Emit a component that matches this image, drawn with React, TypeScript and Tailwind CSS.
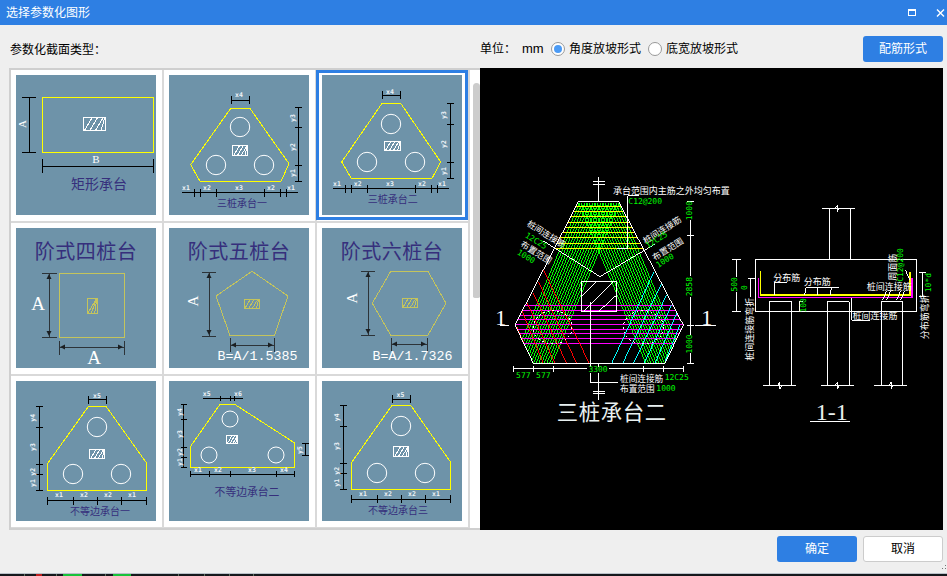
import React from "react";

const cjk = "'Noto Sans CJK SC', sans-serif";
const mono = "'DejaVu Sans Mono', monospace";
const serif = "'Liberation Serif', 'Noto Sans CJK SC', serif";

type TP = { x: number; y: number; s: number; c?: string; r?: number; f?: string; a?: "start" | "middle" | "end"; ls?: number; b?: boolean; children: React.ReactNode };
function T({ x, y, s, c = "#fff", r, f = cjk, a = "middle", ls, b, children }: TP) {
  return (
    <text x={x} y={y} fontSize={s} fill={c} fontFamily={f} textAnchor={a} dominantBaseline="central" letterSpacing={ls} fontWeight={b ? 700 : 400}
      transform={r !== undefined ? `rotate(${r} ${x} ${y})` : undefined} shapeRendering="auto">
      {children}
    </text>
  );
}

const dimH = (y: number, xs: number[], t = 4) =>
  `M${xs[0]} ${y}H${xs[xs.length - 1]}` + xs.map((x) => `M${x} ${y - t}V${y + t}`).join("");
const dimV = (x: number, ys: number[], t = 4) =>
  `M${x} ${ys[0]}V${ys[ys.length - 1]}` + ys.map((y) => `M${x - t} ${y}H${x + t}`).join("");

function Hatch({ x0, x1, y0, y1, c = "#fff", n = 4 }: { x0: number; x1: number; y0: number; y1: number; c?: string; n?: number }) {
  const h = y1 - y0;
  const w = x1 - x0;
  const d = [];
  for (let i = 0; i < n; i++) {
    const bx = x0 + ((i + 0.3) * w) / n;
    d.push(`M${bx} ${y1}L${Math.min(bx + h * 0.6, x1)} ${y0}`);
  }
  return (
    <g fill="none" stroke={c}>
      <rect x={x0} y={y0} width={w} height={h} />
      <path d={d.join("")} />
    </g>
  );
}

const Y = "#ffff00";
const NAVY = "#362f7c";

function Thumb({ children }: { children: React.ReactNode }) {
  return (
    <svg viewBox="0 0 140 140" className="block w-[140px] h-[140px] bg-[#6e93a9]" shapeRendering="crispEdges">
      {children}
    </svg>
  );
}

type Tri = {
  poly: string;
  circles: number[][];
  r?: number;
  hatch: number[];
  black: string;
  labels: [string, number, number, boolean?][];
  title: string;
  tx: number;
  ty: number;
  ts?: number;
};

function PileThumb({ d }: { d: Tri }) {
  return (
    <Thumb>
      <polygon points={d.poly} fill="none" stroke={Y} />
      {d.circles.map((c, i) => (
        <circle key={i} cx={c[0]} cy={c[1]} r={d.r ?? 9.7} fill="none" stroke="#fff" shapeRendering="auto" />
      ))}
      <Hatch x0={d.hatch[0]} x1={d.hatch[1]} y0={d.hatch[2]} y1={d.hatch[3]} />
      <path d={d.black} fill="none" stroke="#000" />
      {d.labels.map((l, i) => (
        <T key={i} x={l[1]} y={l[2]} s={6.5} f={mono} b r={l[3] ? -90 : undefined} c="#eef4f8">
          {l[0]}
        </T>
      ))}
      <T x={d.tx} y={d.ty} s={d.ts ?? 10} c={NAVY}>
        {d.title}
      </T>
    </Thumb>
  );
}

const t1: Tri = {
  poly: "62,33 80.7,33 120,88.7 112,106.3 31,106.3 21.7,89.7",
  circles: [[71, 52], [47, 90], [95, 90]],
  hatch: [63.5, 78.5, 70, 80.5],
  black: dimH(25, [62.7, 80.3]) + dimV(129.5, [32.7, 52.7, 90.3, 106.3], 3.5) + dimH(117.5, [25.3, 31.3, 47.3, 95.3, 111.3, 117.3], 4) + "M13.3 117.5H128.7",
  labels: [["x4", 70, 20], ["y3", 124, 43, true], ["y2", 124, 72, true], ["y1", 124, 98, true], ["x1", 17, 112.5], ["x2", 38, 112.5], ["x3", 70, 112.5], ["x2", 102, 112.5], ["x1", 122, 112.5]],
  title: "三桩承台一", tx: 73, ty: 127,
};
const t2: Tri = {
  poly: "60,28.3 78.7,28.3 118.7,87 110,103.3 29.3,103.3 19.7,87",
  circles: [[69, 49], [45, 87], [93, 87]],
  hatch: [62.5, 78.5, 66, 75],
  black: dimH(20, [60.7, 78.3]) + dimV(128, [28.3, 49.3, 87.3, 103.3], 3.5) + dimH(113.5, [23.7, 29.3, 45.3, 93.3, 109.3, 115.3], 4) + "M11.3 113.5H126.7",
  labels: [["x4", 68, 17], ["y3", 122, 40, true], ["y2", 122, 69, true], ["y1", 122, 96, true], ["x1", 15, 109], ["x2", 35.7, 109], ["x3", 68, 109], ["x2", 100, 109], ["x1", 120, 109]],
  title: "三桩承台二", tx: 70.7, ty: 123.7,
};
const t3: Tri = {
  poly: "72.3,25.7 90.3,25.7 130.7,82.3 130.7,109.3 31.7,109.3 31.7,82.3",
  circles: [[81, 46], [57, 93], [105, 93]],
  hatch: [73.5, 88.5, 68.5, 77.5],
  black: dimH(18.7, [72.7, 90.3]) + dimV(23.7, [25.7, 46.3, 83.3, 93.3, 109.3], 3.5) + dimH(119.7, [31.7, 57.3, 81.3, 105.7, 130.7], 4),
  labels: [["x5", 81, 15], ["y4", 17.3, 36.7, true], ["y3", 17.3, 66, true], ["y2", 17.3, 90.7, true], ["y1", 17.3, 102, true], ["x1", 43, 114.3], ["x2", 68, 114.3], ["x2", 92, 114.3], ["x1", 116, 114.3]],
  title: "不等边承台一", tx: 84, ty: 129.7,
};
const t4: Tri = {
  poly: "51,23.3 65.7,23.3 125.7,62 125.7,86.3 21.3,86.3 21.3,65.7",
  circles: [[61, 38], [40, 74], [107, 74]],
  r: 8,
  hatch: [57.5, 68.5, 54.5, 62.5],
  black: dimH(17.3, [51.3, 61.7, 65.7], 2.5) + "M34.3 17.3H73.7" + dimV(14.7, [23.3, 38.3, 66, 76.7, 86.3], 3) + dimV(136, [62, 74.3], 3.5) + dimH(93.3, [21.3, 40.3, 61, 107.3, 125.7], 3),
  labels: [["x5", 37.7, 13], ["x6", 69, 13], ["y4", 11, 31, true], ["y3", 11, 53, true], ["y2", 11, 71, true], ["y1", 11, 81, true], ["y5", 131, 69, true], ["x1", 29, 89], ["x2", 49, 89], ["x3", 83, 89], ["x4", 115, 89]],
  title: "不等边承台二", tx: 78, ty: 110.3, ts: 10.8,
};
const t5: Tri = {
  poly: "70,24.3 88.7,24.3 128.7,81.3 128.7,108.3 29.7,108.3 29.7,81.3",
  circles: [[79, 45], [55, 92], [103, 92]],
  hatch: [71.5, 86.5, 65.5, 75.5],
  black: dimH(18.3, [70.7, 88.3]) + dimV(21.7, [24.3, 45.3, 82.3, 92.7, 108.3], 3.5) + dimH(118.3, [29.7, 55.3, 79.3, 103.3, 128.7], 4),
  labels: [["x5", 78.5, 14], ["y4", 15.3, 36.3, true], ["y3", 15.3, 65, true], ["y2", 15.3, 89.7, true], ["y1", 15.3, 101.7, true], ["x1", 41, 113.3], ["x2", 66, 113.3], ["x2", 90, 113.3], ["x1", 114, 113.3]],
  title: "不等边承台三", tx: 76, ty: 128.7,
};

const OL = "#c4c45c";
const DK = "#2c3338";

function Arrows({ v, h }: { v?: number[]; h?: number[] }) {
  return (
    <g fill="#1b1f22" shapeRendering="auto">
      {v && (
        <>
          <polygon points={`${v[0]},${v[1]} ${v[0] - 2.5},${v[1] + 5} ${v[0] + 2.5},${v[1] + 5}`} />
          <polygon points={`${v[0]},${v[2]} ${v[0] - 2.5},${v[2] - 5} ${v[0] + 2.5},${v[2] - 5}`} />
        </>
      )}
      {h && (
        <>
          <polygon points={`${h[0]},${h[2]} ${h[0] + 5},${h[2] - 2.5} ${h[0] + 5},${h[2] + 2.5}`} />
          <polygon points={`${h[1]},${h[2]} ${h[1] - 5},${h[2] - 2.5} ${h[1] - 5},${h[2] + 2.5}`} />
        </>
      )}
    </g>
  );
}

function Rect() {
  return (
    <Thumb>
      <rect x={26} y={22} width={111} height={55} fill="none" stroke={Y} />
      <Hatch x0={67} x1={89} y0={42} y1={55} />
      <path d={dimV(13, [22, 77], 7) + dimH(91, [26, 137], 7)} fill="none" stroke="#000" />
      <T x={6} y={49} s={11} f={serif} r={-90}>A</T>
      <T x={80} y={84} s={11} f={serif}>B</T>
      <T x={83} y={108} s={14} c={NAVY}>矩形承台</T>
    </Thumb>
  );
}

function Step4() {
  return (
    <Thumb>
      <T x={70} y={22} s={20} c={NAVY} ls={0.5}>阶式四桩台</T>
      <rect x={43} y={45} width={65} height={64} fill="none" stroke={OL} />
      <Hatch x0={71} x1={81} y0={70} y1={85} c={OL} n={3} />
      <path d="M33 45V109M26 45H41M26 109H41M43 119H108M43 113V127M108 113V127" fill="none" stroke={DK} />
      <Arrows v={[33, 46, 108]} h={[44, 107, 119]} />
      <T x={22} y={75} s={19} f={serif}>A</T>
      <T x={78} y={129} s={19} f={serif}>A</T>
    </Thumb>
  );
}
function Step5() {
  return (
    <Thumb>
      <T x={70} y={22} s={20} c={NAVY} ls={0.5}>阶式五桩台</T>
      <polygon points="83,43.3 119,68 105.3,107.7 61,107.7 47,68" fill="none" stroke={OL} />
      <Hatch x0={75} x1={90} y0={71} y1={80} c={OL} n={4} />
      <path d="M40 44V108M33 44H47M33 108H47M61 117H105M61 110V124M105 110V124" fill="none" stroke={DK} />
      <Arrows v={[40, 45, 107]} h={[62, 104, 117]} />
      <T x={24} y={73} s={15} f={serif} r={-90}>A</T>
      <T x={88.5} y={128} s={13.3} f="'Liberation Mono', monospace">B=A/1.5385</T>
    </Thumb>
  );
}
function Step6() {
  return (
    <Thumb>
      <T x={70} y={22} s={20} c={NAVY} ls={0.5}>阶式六桩台</T>
      <polygon points="68.7,43.3 106,43.3 124,75.3 106,107 68.7,107 50.3,75.3" fill="none" stroke={OL} />
      <Hatch x0={80} x1={95} y0={70} y1={79} c={OL} n={4} />
      <path d="M46 43V107M39 43H53M39 107H53M69 116H105M69 110V123M105 110V123" fill="none" stroke={DK} />
      <Arrows v={[46, 44, 106]} h={[70, 104, 116]} />
      <T x={30} y={70} s={15} f={serif} r={-90}>A</T>
      <T x={90.5} y={128} s={13.3} f="'Liberation Mono', monospace">B=A/1.7326</T>
    </Thumb>
  );
}

function Plan() {
  const G = "#00ff00";
  const green: string[] = [];
  for (let i = 0; i < 16; i++) {
    const x = 238 + i * 8;
    green.push(`M${x} 100L${x - 0.42 * 480} 580`);
    green.push(`M${594 - x} 100L${594 - x + 0.42 * 480} 580`);
  }
  const ys = [95, 110, 125, 141, 157, 173, 188, 204, 220, 235];
  const ms = [408, 422, 436, 450, 464, 478, 492, 506, 520];
  return (
    <g transform="translate(500 170) scale(0.33333)" fill="none" strokeWidth={3}>
      <defs>
        <clipPath id="hex">
          <polygon points="235,95 356,95 550,465 495,580 100,580 45,465" />
        </clipPath>
      </defs>
      <g clipPath="url(#hex)">
        <path d={green.join("")} stroke={G} />
        <path d={ys.map((y) => `M0 ${y}H600`).join("")} stroke={Y} />
        <path d={ms.map((y) => `M0 ${y}H600`).join("")} stroke="#ff00ff" />
        <path d="M130 300L268 580M115 335L230 580M100 370L200 580M82 400L165 580M65 420L130 580M50 470L95 575" stroke="#ff0000" />
        <path d="M462 305L335 580M485 340L368 580M500 375L400 580M515 405L432 580M530 430L465 580M540 465L495 575" stroke="#00ffff" />
      </g>
      <polygon points="235,95 356,95 550,465 495,580 100,580 45,465" stroke="#fff" />
      <path d="M130 213L300 320L465 222" stroke="#fff" />
      <rect x={245} y={335} width={105} height={90} stroke="#fff" />
      <path d="M245 380L290 335M250 425L340 335M295 425L350 375" stroke="#fff" />
      <ellipse cx={158} cy={472} rx={58} ry={50} stroke="#fff" strokeDasharray="5 9" />
      <ellipse cx={430} cy={472} rx={60} ry={50} stroke="#fff" strokeDasharray="5 9" />
      <path d="M297 20V95M297 580V690M279 36H315M279 44H315M279 664H315M279 672H315" stroke="#fff" />
      <path d="M272 395V638H355M272 440V525" stroke="#fff" />
      <path d="M418 78H383V237H350" stroke="#fff" />
      <path d="M0 467H28M585 467H648" stroke="#fff" />
      <path d={dimV(572, [95, 198, 467, 580], 10)} stroke="#fff" />
      <path d={dimH(597, [42, 100, 160, 430, 490, 550], 9)} stroke="#fff" />
      <T x={514} y={63} s={27}>承台范围内主筋之外均匀布置</T>
      <T x={385} y={96} s={24} c={G} f={mono} a="start">C12@200</T>
      <rect x={558} y={95} width={24} height={55} fill="#000" />
      <rect x={558} y={318} width={24} height={62} fill="#000" />
      <rect x={558} y={495} width={24} height={55} fill="#000" />
      <T x={570} y={122} s={24} c={G} f={mono} r={-90}>1000</T>
      <T x={570} y={350} s={24} c={G} f={mono} r={-90}>2858</T>
      <T x={570} y={522} s={24} c={G} f={mono} r={-90}>1000</T>
      <rect x={262} y={590} width={64} height={20} fill="#000" />
      <T x={294} y={600} s={24} c={G} f={mono}>3300</T>
      <T x={70} y={618} s={24} c={G} f={mono}>577</T>
      <T x={130} y={618} s={24} c={G} f={mono}>577</T>
      <T x={140} y={190} s={26} r={32}>桩间连接筋</T>
      <T x={108} y={213} s={24} c={G} f={mono} r={32}>12C25</T>
      <T x={110} y={245} s={26} r={32}>布置范围</T>
      <T x={78} y={260} s={24} c={G} f={mono} r={32}>1000</T>
      <T x={485} y={178} s={26} r={-32}>桩间连接筋</T>
      <T x={470} y={210} s={24} c={G} f={mono} r={-32}>12C25</T>
      <T x={502} y={235} s={26} r={-32}>布置范围</T>
      <T x={495} y={272} s={24} c={G} f={mono} r={-32}>1000</T>
      <T x={360} y={623} s={26} a="start">桩间连接筋</T>
      <T x={494} y={623} s={24} c={G} f={mono} a="start">12C25</T>
      <T x={360} y={655} s={26} a="start">布置范围</T>
      <T x={469} y={655} s={24} c={G} f={mono} a="start">1000</T>
      <T x={335} y={722} s={64} c="#e8f0f0" ls={2}>三桩承台二</T>
      <T x={2} y={442} s={66} f={serif}>1</T>
      <T x={620} y={442} s={66} f={serif}>1</T>
    </g>
  );
}

function Section() {
  const G = "#00ff00";
  return (
    <g transform="translate(730 200) scale(0.33333)" fill="none" strokeWidth={3}>
      <rect x={76} y={178} width={484} height={157} stroke="#fff" />
      <path d="M298 178V25M362 178V25M276 25H375" stroke="#fff" />
      <path d="M118 305V556M185 305V556M292 305V556M358 305V556M454 305V556M518 305V556M118 305H185M292 305H358M454 305H518M100 556H198M273 556H372M433 556H530" stroke="#fff" />
      <path d="M143 556L150 546V566L155 556M316 556L323 546V566L328 556M477 556L484 546V566L489 556M316 25L322 15V35L327 25" stroke="#fff" />
      <path d="M92 212V285H540V216" stroke={Y} strokeWidth={5} />
      <path d="M86 235V293H546V235" stroke="#ff00ff" strokeWidth={5} />
      <path d="M133 285V247H170M224 285L228 263H326M264 263L262 285M304 263L301 285M365 295V361H420" stroke="#fff" />
      <path d="M458 300L470 272M470 300L482 272M500 300L512 272M512 300L524 272M526 210L540 240" stroke="#fff" />
      <path d={dimV(20, [178, 335], 13)} stroke="#fff" />
      <path d="M55 237H75M62 237V290M206 305H220M206 335H220M208 305V335" stroke="#fff" />
      <path d={dimV(577, [217, 290], 10)} stroke="#fff" />
      <rect x={5} y={232} width={22} height={44} fill="#000" />
      <T x={15} y={253} s={24} c={G} f={mono} r={-90}>500</T>
      <T x={45} y={263} s={24} c={G} f={mono} r={-90}>0</T>
      <T x={60} y={388} s={27} r={-90}>桩间连接筋弯折</T>
      <T x={583} y={350} s={27} r={-90}>分布筋弯折</T>
      <T x={597} y={248} s={24} c={G} f={mono} r={-90}>10*d</T>
      <T x={170} y={232} s={27}>分布筋</T>
      <T x={262} y={246} s={27}>分布筋</T>
      <T x={478} y={261} s={27}>桩间连接筋</T>
      <T x={435} y={348} s={27}>桩间连接筋</T>
      <T x={487} y={202} s={27} r={-90}>周面筋</T>
      <T x={513} y={195} s={24} c={G} f={mono} r={-90}>C12@200</T>
      <T x={222} y={316} s={24} c={G} f={mono} r={-90}>100</T>
      <T x={305} y={636} s={72} c="#e8f0f0" f={serif}>1-1</T>
      <path d="M240 664H360" stroke="#fff" />
    </g>
  );
}

const cellCls = "relative p-[5px] w-[153px] h-[153px] border-r-2 border-b-2 border-[#d9d9d9]";

export default function App() {
  return (
    <div className="relative w-[947px] h-[576px] overflow-hidden flex flex-col bg-[#efefef] text-[12px] text-black [font-family:'Liberation_Sans','Noto_Sans_CJK_SC',sans-serif]">
      <div className="h-[25px] shrink-0 bg-[#2e7fe3] flex items-center pl-[6px] pr-[2px] text-white">
        <span>选择参数化图形</span>
        <svg viewBox="0 0 38 12" className="ml-auto w-[38px] h-[12px]" fill="none" stroke="#fff" shapeRendering="crispEdges">
          <rect x="1.5" y="2.5" width="7" height="6" />
          <path d="M1.5 3H8.5" />
          <path d="M30 2.5L37 9.5M37 2.5L30 9.5" strokeWidth="1.4" shapeRendering="auto" />
        </svg>
      </div>

      <div className="h-[43px] shrink-0 flex pl-[10px] pr-[4px]">
        <span className="mt-[18px] w-[470px] leading-[14px]">参数化截面类型：</span>
        <div className="mt-[11px] h-[26px] flex-1 flex items-center">
          <span className="w-[42px]">单位：</span>
          <span className="w-[29px] text-[13px]">mm</span>
          <span className="w-[14px] h-[14px] rounded-full border border-[#999] bg-white flex items-center justify-center">
            <span className="w-[8px] h-[8px] rounded-full bg-[#4c9bf5]" />
          </span>
          <span className="ml-[4px] w-[79px]">角度放坡形式</span>
          <span className="w-[14px] h-[14px] rounded-full border border-[#999] bg-white" />
          <span className="ml-[4px]">底宽放坡形式</span>
          <button className="ml-auto w-[80px] h-[26px] rounded-[3px] bg-[#2e7fe3] text-white">配筋形式</button>
        </div>
      </div>

      <div className="h-[462px] shrink-0 flex pl-[9px] pr-[4px]">
        <div className="w-[471px] h-full border-2 border-r-0 border-[#cfcfcf] bg-white flex overflow-hidden">
          <div className="w-[459px] shrink-0 h-[500px] grid grid-cols-[153px_153px_153px] auto-rows-[153px]">
            <div className={cellCls}><Rect /></div>
            <div className={cellCls}><PileThumb d={t1} /></div>
            <div className={cellCls}>
              <PileThumb d={t2} />
              <div className="absolute left-[-1px] top-0 w-[152px] h-[150px] border-[3px] border-[#2e7fe3]" />
            </div>
            <div className={cellCls}><Step4 /></div>
            <div className={cellCls}><Step5 /></div>
            <div className={cellCls}><Step6 /></div>
            <div className={cellCls}><PileThumb d={t3} /></div>
            <div className={cellCls}><PileThumb d={t4} /></div>
            <div className={cellCls}><PileThumb d={t5} /></div>
          </div>
          <div className="flex-1 flex justify-end">
            <div className="mt-[13px] w-[7px] h-[215px] rounded-t-[4px] rounded-b-[2px] bg-[#cccccc]" />
          </div>
        </div>
        <svg viewBox="480 68 463 462" className="block w-[463px] h-[462px] bg-black" shapeRendering="crispEdges">
          <Plan />
          <Section />
        </svg>
      </div>

      <div className="flex-1 flex justify-end items-start pr-[4px] pt-[6px] gap-[6px]">
        <button className="w-[80px] h-[26px] rounded-[3px] bg-[#2e7fe3] text-white">确定</button>
        <button className="w-[80px] h-[26px] rounded-[3px] bg-white border border-[#cccccc]">取消</button>
      </div>

      <svg viewBox="0 0 5 5" className="absolute right-0 bottom-[6px] w-[5px] h-[5px]" fill="#777" shapeRendering="crispEdges">
        <rect x="3" y="0" width="1" height="1" />
        <rect x="0" y="3" width="1" height="1" />
        <rect x="3" y="3" width="1" height="1" />
      </svg>

      <svg viewBox="0 0 947 3" className="block w-[947px] h-[3px] shrink-0" shapeRendering="crispEdges">
        <rect width="947" height="1" fill="#b9c0c8" />
        <rect y="1" width="947" height="2" fill="#15181c" />
        <path d="M63 2H82M113 2H131" stroke="#19c23a" strokeWidth="2" />
        <path d="M36 2H42" stroke="#c02020" strokeWidth="2" />
        <path d="M24 3V1M56 3V1M105 3V1M178 3V1M204 3V1M229 3V1M253 3V1" stroke="#607060" />
      </svg>
    </div>
  );
}
